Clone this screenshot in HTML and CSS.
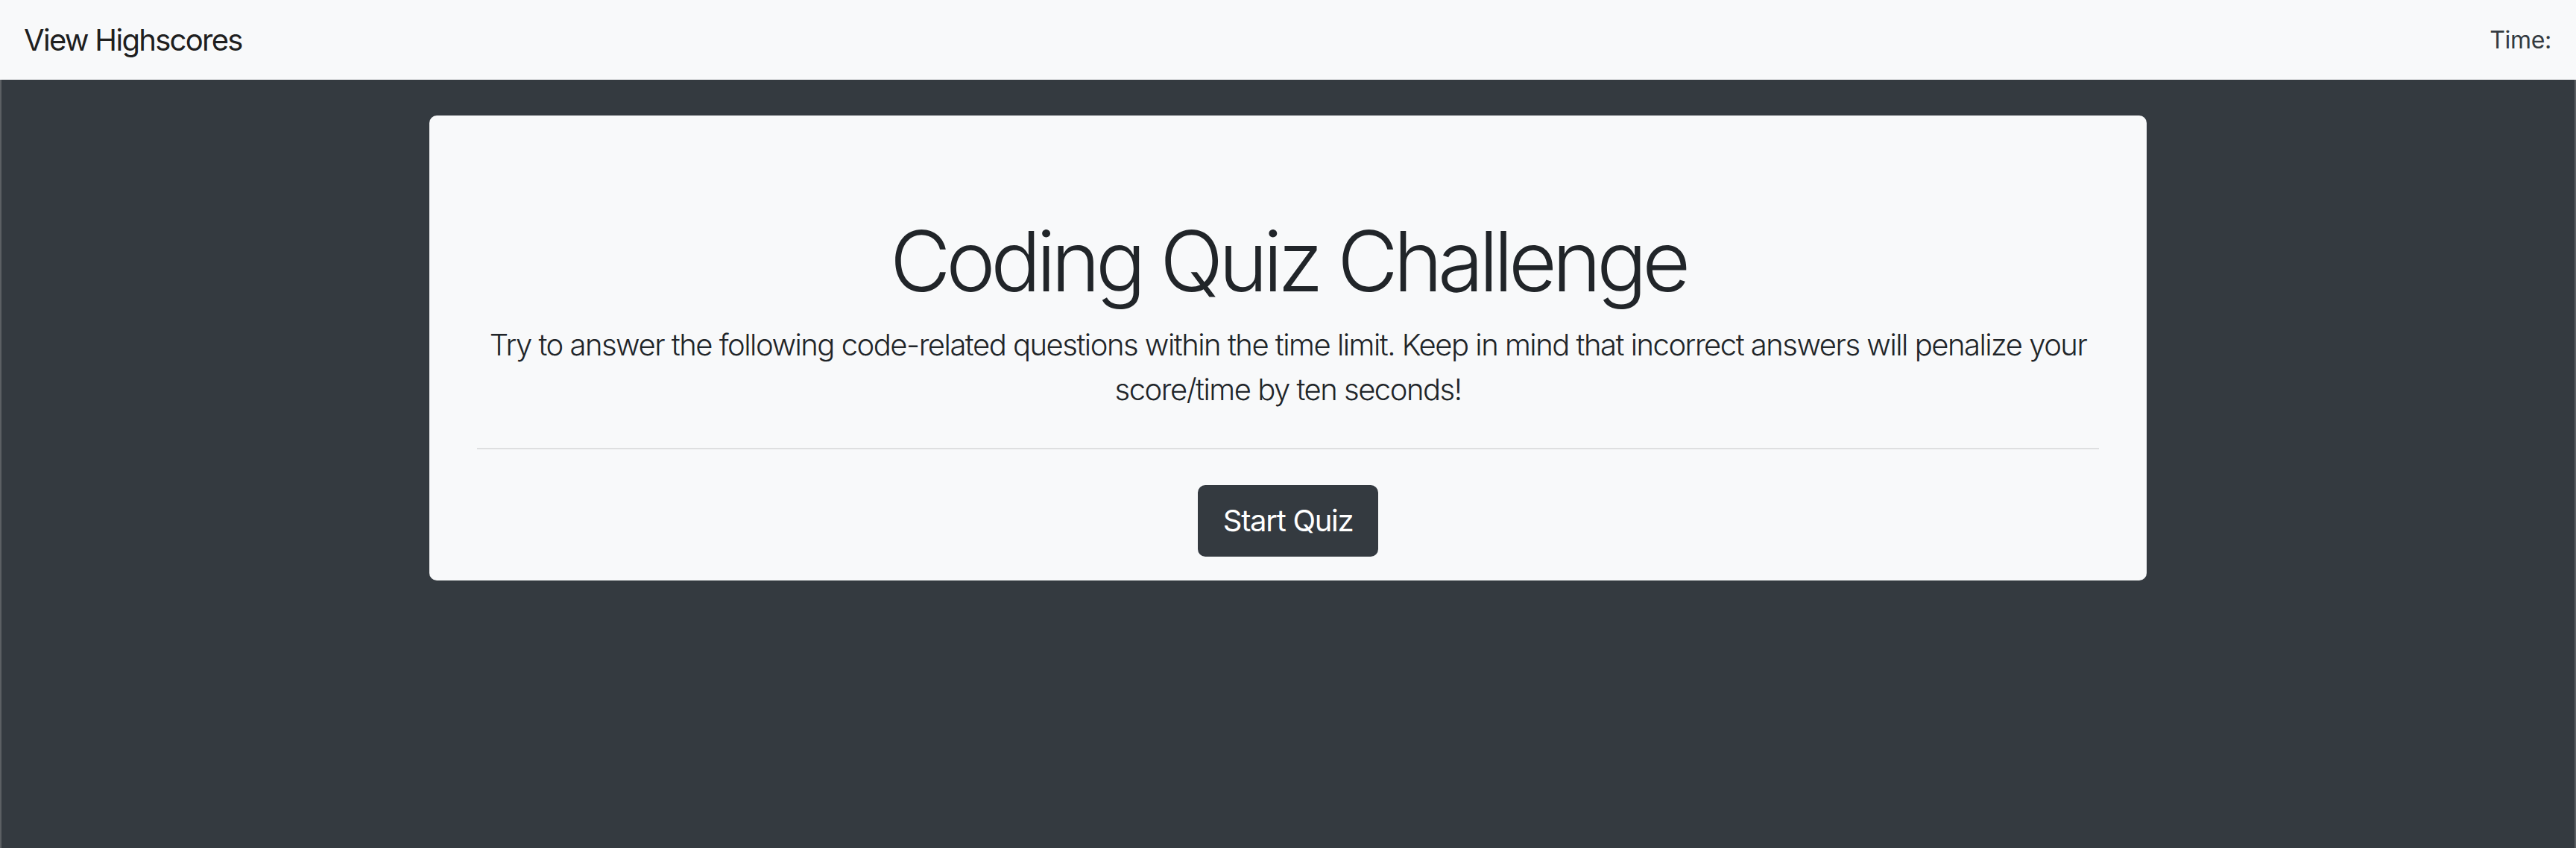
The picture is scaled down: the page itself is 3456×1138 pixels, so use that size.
FILE: index.html
```html
<!DOCTYPE html>
<html lang="en">
<head>
<meta charset="utf-8">
<title>Coding Quiz Challenge</title>
<link rel="stylesheet" href="styles.css">
</head>
<body>
<nav class="navbar">
  <a class="brand" href="#">View Highscores</a>
  <span class="timer">Time:</span>
</nav>
<main class="main">
  <section class="card">
    <h1 class="title">Coding Quiz Challenge</h1>
    <p class="lead">Try to answer the following code-related questions within the time limit. Keep in mind that incorrect answers will penalize your score/time by ten seconds!</p>
    <hr class="divider">
    <button class="btn">Start Quiz</button>
  </section>
</main>
</body>
</html>
```
FILE: styles.css
```css
* { box-sizing: border-box; }
html, body { margin: 0; padding: 0; height: 100%; }
body {
  font-family: Inter, "Noto Sans", "Liberation Sans", sans-serif;
  color: #212529;
  background: #343a40;
  display: flex;
  flex-direction: column;
}
.navbar {
  height: 107px;
  flex: none;
  background: #f8f9fa;
  display: flex;
  align-items: center;
  justify-content: space-between;
  padding: 0 33px 0 32px;
}
.brand {
  font-size: 40px;
  color: rgba(0,0,0,0.9);
  text-decoration: none;
  letter-spacing: -1.7px;
}
.timer {
  font-size: 32px;
  color: #343a40;
  letter-spacing: -0.3px;
}
.main {
  flex: 1;
  background: #343a40;
  border-left: 2px solid #5b5f63;
  border-right: 2px solid #5b5f63;
  display: flex;
  flex-direction: column;
  align-items: center;
  padding-top: 48px;
}
.card {
  width: 2304px;
  background: #f8f9fa;
  border-radius: 10px;
  padding: 128px 64px 32px;
  display: flex;
  flex-direction: column;
  align-items: center;
  text-align: center;
}
.title {
  margin: 0 0 16px;
  font-size: 112px;
  font-weight: 300;
  line-height: 134px;
  letter-spacing: -6.3px;
}
.lead {
  margin: 0;
  font-size: 40px;
  font-weight: 300;
  line-height: 60px;
  letter-spacing: -1.5px;
  max-width: 2176px;
}
.divider {
  align-self: stretch;
  margin: 48px 0;
  border: 0;
  border-top: 2px solid rgba(0,0,0,0.1);
  height: 0;
}
.btn {
  font-family: inherit;
  font-size: 40px;
  line-height: 60px;
  padding: 16px 32px;
  letter-spacing: -1.3px;
  color: #fff;
  background: #343a40;
  border: 2px solid #343a40;
  border-radius: 10px;
}
```
